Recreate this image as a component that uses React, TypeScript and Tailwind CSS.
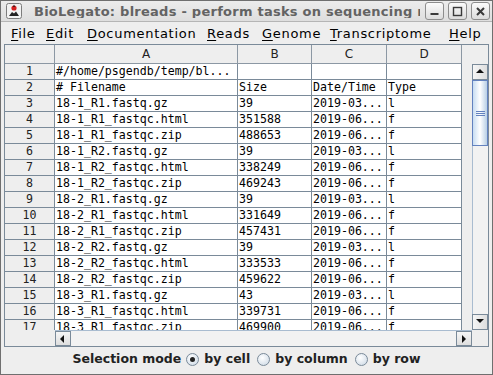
import React from 'react';

const rows: string[][] = [
  ['#/home/psgendb/temp/bl...', '', '', ''],
  ['# Filename', 'Size', 'Date/Time', 'Type'],
  ['18-1_R1.fastq.gz', '39', '2019-03...', 'l'],
  ['18-1_R1_fastqc.html', '351588', '2019-06...', 'f'],
  ['18-1_R1_fastqc.zip', '488653', '2019-06...', 'f'],
  ['18-1_R2.fastq.gz', '39', '2019-03...', 'l'],
  ['18-1_R2_fastqc.html', '338249', '2019-06...', 'f'],
  ['18-1_R2_fastqc.zip', '469243', '2019-06...', 'f'],
  ['18-2_R1.fastq.gz', '39', '2019-03...', 'l'],
  ['18-2_R1_fastqc.html', '331649', '2019-06...', 'f'],
  ['18-2_R1_fastqc.zip', '457431', '2019-06...', 'f'],
  ['18-2_R2.fastq.gz', '39', '2019-03...', 'l'],
  ['18-2_R2_fastqc.html', '333533', '2019-06...', 'f'],
  ['18-2_R2_fastqc.zip', '459622', '2019-06...', 'f'],
  ['18-3_R1.fastq.gz', '43', '2019-03...', 'l'],
  ['18-3_R1_fastqc.html', '339731', '2019-06...', 'f'],
  ['18-3_R1_fastqc.zip', '469900', '2019-06...', 'f'],
];

const colWidths = ['w-[183px]', 'w-[74px]', 'w-[75px]', 'w-[75px]'];
const colNames = ['A', 'B', 'C', 'D'];

const menus = [
  { label: 'File', w: 'w-[35px]' },
  { label: 'Edit', w: 'w-[41px]' },
  { label: 'Documentation', w: 'w-[120px]' },
  { label: 'Reads', w: 'w-[55px]' },
  { label: 'Genome', w: 'w-[68px]' },
  { label: 'Transcriptome', w: 'w-[119px]' },
  { label: 'Help', w: 'w-[40px]' },
];

const Radio: React.FC<{ checked?: boolean; label: string }> = ({ checked, label }) => (
  <div className="flex items-center gap-[5px]">
    <div className="w-[13px] h-[13px] rounded-full border border-[#7a8a99] bg-[radial-gradient(circle_at_40%_35%,#ffffff,#c9d6e3)] flex items-center justify-center">
      {checked && <div className="w-[5px] h-[5px] rounded-full bg-[#222]" />}
    </div>
    <span>{label}</span>
  </div>
);

const Arrow: React.FC<{ dir: 'up' | 'down' | 'left' | 'right' }> = ({ dir }) => {
  const pts = {
    up: '1,6 5,2 9,6',
    down: '1,2 5,6 9,2',
    left: '6,1 2,5 6,9',
    right: '3,1 7,5 3,9',
  }[dir];
  return (
    <svg width="10" height="10" viewBox="0 0 10 10">
      <polygon points={pts} fill="#111" />
    </svg>
  );
};

const App: React.FC = () => {
  return (
    <div className="w-[493px] h-[375px] bg-[#eeeeee] border border-[#6f6f6f] flex flex-col overflow-hidden text-black font-['DejaVu_Sans',sans-serif]">
      {/* Title bar */}
      <div className="h-[21px] shrink-0 flex items-center bg-gradient-to-b from-[#ececec] to-[#dedede] border-b border-[#b5b5b5]">
        <div className="ml-[5px] w-[16px] h-[16px] shrink-0">
          <svg width="16" height="16" viewBox="0 0 16 16">
            <rect x="0.5" y="0.5" width="15" height="15" rx="2" fill="#f2f2f2" stroke="#7d7d7d" />
            <circle cx="8" cy="5" r="2.6" fill="#d42020" />
            <path d="M3 13 L6 9 L8 10.5 L10 8.5 L13 13 Z" fill="#222" />
            <path d="M7 4 L8 1.5 L9 4 Z" fill="#222" />
          </svg>
        </div>
        <div className="ml-[12px] w-[386px] overflow-hidden whitespace-nowrap text-[13px] tracking-[0.25px] font-bold text-[#636363] leading-none">
          BioLegato: blreads - perform tasks on sequencing r
        </div>
        <div className="ml-auto mr-[2px] flex gap-[4px]">
          {['min', 'max', 'close'].map((k) => (
            <div
              key={k}
              className="w-[19px] h-[18px] rounded-[3px] border border-[#8d8d8d] bg-gradient-to-b from-[#fbfbfb] to-[#dcdcdc] flex items-center justify-center"
            >
              <svg width="11" height="11" viewBox="0 0 11 11">
                {k === 'min' && <rect x="1.5" y="7" width="8" height="2" fill="#3a3a3a" />}
                {k === 'max' && <rect x="1.5" y="1.5" width="8" height="8" fill="none" stroke="#3a3a3a" strokeWidth="1.4" />}
                {k === 'close' && (
                  <path d="M2 2 L9 9 M9 2 L2 9" stroke="#3a3a3a" strokeWidth="2" />
                )}
              </svg>
            </div>
          ))}
        </div>
      </div>

      {/* Menu bar */}
      <div className="h-[22px] shrink-0 flex items-center pl-[10px] text-[13px] tracking-[0.7px] leading-none">
        {menus.map((m) => (
          <span key={m.label} className={`${m.w} shrink-0 whitespace-nowrap`}>
            <span className="underline underline-offset-2">{m.label[0]}</span>
            {m.label.slice(1)}
          </span>
        ))}
      </div>

      {/* Scroll pane */}
      <div className="mx-[3px] w-[485px] h-[303px] shrink-0 border border-[#7a8a99] flex flex-col bg-[#eeeeee]">
        {/* Header */}
        <div className="h-[19px] shrink-0 flex text-[12px] text-[#222] leading-none">
          <div className="w-[50px] shrink-0 border-r border-b border-[#8c98a4]" />
          {colNames.map((c, i) => (
            <div
              key={c}
              className={`${colWidths[i]} shrink-0 border-r border-b border-[#8c98a4] flex items-center justify-center`}
            >
              {c}
            </div>
          ))}
        </div>

        {/* Body */}
        <div className="h-[266px] shrink-0 flex overflow-hidden">
          <div className="w-[50px] shrink-0 flex flex-col font-['DejaVu_Sans_Mono',monospace] text-[11.6px] text-[#222] leading-none">
            {rows.map((_, r) => (
              <div
                key={r}
                className="h-[16px] shrink-0 border-r border-b border-[#7a8a99] flex items-center justify-center"
              >
                {r + 1}
              </div>
            ))}
          </div>
          <div className="w-[417px] shrink-0 flex flex-col">
            {rows.map((row, r) => (
              <div key={r} className="h-[16px] shrink-0 flex">
                {row.map((cell, c) => (
                  <div
                    key={c}
                    className={`${colWidths[c]} shrink-0 bg-white border-r border-b border-[#7a8a99] pl-[1px] flex items-center overflow-hidden whitespace-nowrap font-['DejaVu_Sans_Mono',monospace] text-[11.6px] leading-none`}
                  >
                    {cell}
                  </div>
                ))}
              </div>
            ))}
          </div>
          {/* Vertical scrollbar */}
          <div className="w-[16px] shrink-0 flex flex-col">
            <div className="h-[16px] shrink-0 border border-[#7a8a99] bg-gradient-to-r from-[#f6f6f6] to-[#dedede] flex items-center justify-center">
              <Arrow dir="up" />
            </div>
            <div className="h-[66px] shrink-0 border border-[#6382bf] bg-gradient-to-r from-[#c8ddf2] via-[#ffffff] to-[#b8cfe5] flex flex-col items-center justify-center gap-[1px]">
              <div className="w-[9px] h-[1px] bg-[#6382bf]" />
              <div className="w-[9px] h-[1px] bg-[#6382bf]" />
              <div className="w-[9px] h-[1px] bg-[#6382bf]" />
            </div>
            <div className="flex-1 border-l border-[#a9bcd0] bg-[#f2f2f2]" />
            <div className="h-[16px] shrink-0 border border-[#7a8a99] bg-gradient-to-r from-[#f6f6f6] to-[#dedede] flex items-center justify-center">
              <Arrow dir="down" />
            </div>
          </div>
        </div>

        {/* Horizontal scrollbar row */}
        <div className="h-[16px] shrink-0 flex">
          <div className="w-[50px] shrink-0" />
          <div className="w-[417px] shrink-0 flex border-t border-[#a9bcd0]">
            <div className="w-[16px] shrink-0 border border-[#7a8a99] bg-gradient-to-b from-[#f6f6f6] to-[#dedede] flex items-center justify-center">
              <Arrow dir="left" />
            </div>
            <div className="flex-1 bg-[#f2f2f2]" />
            <div className="w-[16px] shrink-0 border border-[#7a8a99] bg-gradient-to-b from-[#f6f6f6] to-[#dedede] flex items-center justify-center">
              <Arrow dir="right" />
            </div>
          </div>
          <div className="w-[16px] shrink-0" />
        </div>
      </div>

      {/* Selection mode */}
      <div className="h-[24px] shrink-0 flex items-center justify-center gap-[7px] text-[12.5px] font-bold text-[#222] leading-none">
        <div className="flex items-center gap-[5px]">
          <span>Selection mode</span>
          <Radio checked label="by cell" />
        </div>
        <Radio label="by column" />
        <Radio label="by row" />
      </div>
    </div>
  );
};

export default App;
